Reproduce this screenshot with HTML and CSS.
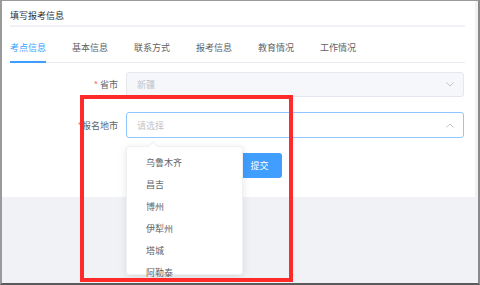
FILE: index.html
```html
<!DOCTYPE html>
<html lang="zh">
<head>
    <meta charset="UTF-8">
    <title>填写报考信息</title>
    <link rel="stylesheet" href="styles.css">
</head>
<body>
    <div class="frame">
        <div class="card">
            <div class="card-title">填写报考信息</div>

            <!-- Tabs -->
            <div class="tabs">
                <div class="tab active">考点信息</div>
                <div class="tab">基本信息</div>
                <div class="tab">联系方式</div>
                <div class="tab">报考信息</div>
                <div class="tab">教育情况</div>
                <div class="tab">工作情况</div>
            </div>

            <!-- Form -->
            <div class="form">
                <div class="form-item">
                    <label class="form-label"><span class="req">*</span> 省市</label>
                    <div class="select disabled">
                        <span class="select-text">新疆</span>
                        <svg class="chevron" width="8" height="5" viewBox="0 0 8 5"><path d="M0.5 0.5 L4 4 L7.5 0.5" fill="none" stroke="#c0c4cc" stroke-width="1"/></svg>
                    </div>
                </div>
                <div class="form-item">
                    <label class="form-label"><span class="req">*</span>报名地市</label>
                    <div class="select focused">
                        <span class="select-text">请选择</span>
                        <svg class="chevron" width="8" height="5" viewBox="0 0 8 5"><path d="M0.5 4.5 L4 1 L7.5 4.5" fill="none" stroke="#c0c4cc" stroke-width="1"/></svg>
                        <div class="dropdown">
                            <div class="dropdown-arrow"></div>
                            <ul class="dropdown-list">
                                <li>乌鲁木齐</li>
                                <li>昌吉</li>
                                <li>博州</li>
                                <li>伊犁州</li>
                                <li>塔城</li>
                                <li>阿勒泰</li>
                            </ul>
                        </div>
                    </div>
                </div>
                <div class="form-item">
                    <div class="form-label"></div>
                    <div class="actions">
                        <button class="btn-primary">提交</button>
                    </div>
                </div>
            </div>
        </div>

        <!-- Annotation -->
        <div class="highlight"></div>
    </div>
</body>
</html>
```

FILE: styles.css
```css
/* General styles */
body {
    margin: 0;
    padding: 0;
    font-family: "Noto Sans CJK SC", "Noto Sans", sans-serif;
    font-size: 9px;
    color: #606266;
}

.frame {
    position: relative;
    width: 480px;
    height: 285px;
    box-sizing: border-box;
    border-top: 1px solid #9a9a9a;
    border-left: 2px solid #9a9a9a;
    border-right: 2px solid #8a8a8a;
    border-bottom: 2px solid #5a5a5a;
    background-color: #f0f2f5;
    overflow: hidden;
}

/* Card */
.card {
    background-color: #fff;
    margin-right: 3px;
    height: 196px;
    padding: 0 10px 0 8px;
    box-sizing: border-box;
}

.card-title {
    height: 24px;
    line-height: 29px;
    color: #303133;
    border-bottom: 2px solid #f0f2f5;
}

/* Tabs */
.tabs {
    display: flex;
    gap: 26px;
    padding-top: 14px;
    border-bottom: 1px solid #e9ebf0;
}

.tab {
    line-height: 14px;
    padding-bottom: 6px;
    border-bottom: 2px solid transparent;
    margin-bottom: -1px;
}

.tab.active {
    color: #409eff;
    border-bottom-color: #409eff;
}

/* Form */
.form {
    padding-top: 9px;
    display: flex;
    flex-direction: column;
    gap: 15px;
}

.form-item {
    display: flex;
    align-items: center;
}

.form-label {
    width: 108px;
    padding-right: 8px;
    text-align: right;
    flex-shrink: 0;
}

.req {
    color: #f56c6c;
}

.select {
    position: relative;
    flex-grow: 1;
    height: 25px;
    box-sizing: border-box;
    border: 1px solid #e4e7ed;
    border-radius: 3px;
    display: flex;
    align-items: center;
    justify-content: space-between;
    padding: 0 9px 0 10px;
    margin-right: 1px;
    color: #c0c4cc;
}

.select.disabled {
    background-color: #f5f7fa;
}

.select.focused {
    border-color: #8fc6ff;
    height: 26px;
}

/* Dropdown */
.dropdown {
    position: absolute;
    top: 33px;
    left: -1px;
    width: 117px;
    height: 129px;
    background-color: #fff;
    border: 1px solid #eef0f3;
    border-radius: 3px;
    box-shadow: 0 2px 8px rgba(0, 0, 0, 0.1);
    box-sizing: border-box;
    z-index: 10;
}

.dropdown-arrow {
    position: absolute;
    top: -4px;
    left: 22px;
    width: 7px;
    height: 7px;
    background-color: #fff;
    border-top: 1px solid #eef0f3;
    border-left: 1px solid #eef0f3;
    transform: rotate(45deg);
}

.dropdown-list {
    list-style: none;
    margin: 0;
    padding: 5px 0 0 0;
    height: 127px;
    overflow: hidden;
}

.dropdown-list li {
    line-height: 22px;
    padding-left: 19px;
    color: #606266;
}

/* Buttons */
.actions {
    padding-left: 111px;
}

.btn-primary {
    font-family: inherit;
    font-size: 9px;
    width: 45px;
    height: 25px;
    background-color: #409eff;
    color: #fff;
    border: none;
    border-radius: 3px;
    padding: 0;
}

/* Red annotation box */
.highlight {
    position: absolute;
    left: 78px;
    top: 94px;
    width: 205px;
    height: 179px;
    border: 4px solid #ff2b2b;
    z-index: 20;
}
```
